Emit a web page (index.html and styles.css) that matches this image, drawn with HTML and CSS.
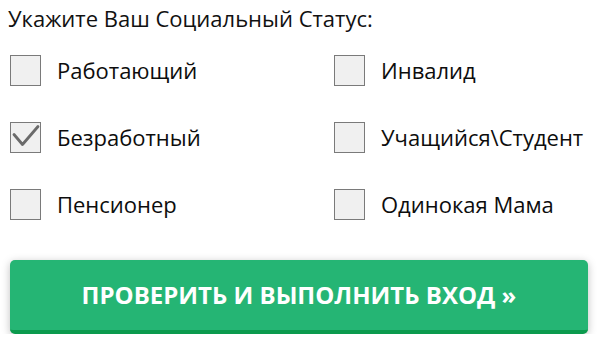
FILE: index.html
```html
<!DOCTYPE html>
<html lang="ru">
<head>
<meta charset="utf-8">
<link rel="stylesheet" href="styles.css">
</head>
<body>
<form class="form">
  <div class="title">Укажите Ваш Социальный Статус:</div>
  <div class="options">
    <label class="opt"><span class="box"></span><span class="txt">Работающий</span></label>
    <label class="opt"><span class="box"></span><span class="txt">Инвалид</span></label>
    <label class="opt"><span class="box"><svg class="check" viewBox="0 0 29 29" width="29" height="29"><path d="M3 11.5 L11.5 21.5 L27 3.5" fill="none" stroke="#6a6a6a" stroke-width="2.8" stroke-linecap="round" stroke-linejoin="round"/></svg></span><span class="txt">Безработный</span></label>
    <label class="opt"><span class="box"></span><span class="txt">Учащийся\Студент</span></label>
    <label class="opt"><span class="box"></span><span class="txt">Пенсионер</span></label>
    <label class="opt"><span class="box"></span><span class="txt">Одинокая Мама</span></label>
  </div>
  <button type="button" class="btn">ПРОВЕРИТЬ И ВЫПОЛНИТЬ ВХОД »</button>
</form>
</body>
</html>
```

FILE: styles.css
```css
html, body {
  margin: 0;
  padding: 0;
  background: #ffffff;
}
body {
  font-family: "Open Sans", "Noto Sans", sans-serif;
  color: #111111;
}
.form {
  padding: 4px 9px 0 10px;
}
.title {
  font-size: 22px;
  line-height: 28px;
  margin-left: -2px;
}
.options {
  display: grid;
  grid-template-columns: 324px 1fr;
  row-gap: 36px;
  margin-top: 23px;
}
.opt {
  display: flex;
  align-items: center;
  height: 31px;
}
.box {
  box-sizing: border-box;
  width: 31px;
  height: 31px;
  border: 1px solid #7a7a7a;
  background: #f0f0f0;
  flex: none;
  display: flex;
  align-items: center;
  justify-content: center;
}
.check {
  display: block;
}
.txt {
  font-size: 22px;
  margin-left: 16px;
  line-height: 31px;
  color: #0d0d0d;
}
.btn {
  display: block;
  box-sizing: border-box;
  width: 578px;
  height: 74px;
  margin-top: 40px;
  border: none;
  border-bottom: 4px solid #0b9a4d;
  border-radius: 5px;
  background: #25b574;
  color: #ffffff;
  font-family: "Open Sans", "Noto Sans", sans-serif;
  font-weight: 700;
  font-size: 24px;
  padding: 0 0 2px 0;
  box-shadow: 0 2px 8px rgba(0, 0, 0, 0.25);
}
```
